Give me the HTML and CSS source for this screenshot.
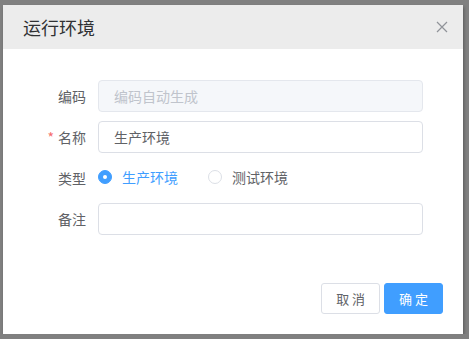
FILE: index.html
```html
<!DOCTYPE html>
<html lang="zh">
<head>
    <meta charset="UTF-8">
    <title>运行环境</title>
    <link rel="stylesheet" href="styles.css">
</head>
<body>
    <div class="dialog">
        <div class="dialog-header">
            <span class="dialog-title">运行环境</span>
            <span class="dialog-close">
                <svg width="12" height="12" viewBox="0 0 12 12"><path d="M1 1L11 11M11 1L1 11" stroke="#909399" stroke-width="1.2" fill="none"/></svg>
            </span>
        </div>
        <div class="dialog-body">
            <div class="form-item">
                <label class="form-label">编码</label>
                <input class="input" disabled placeholder="编码自动生成">
            </div>
            <div class="form-item">
                <label class="form-label required">名称</label>
                <input class="input" value="生产环境">
            </div>
            <div class="form-item">
                <label class="form-label">类型</label>
                <div class="radios">
                    <label class="radio checked"><span class="radio-inner"></span><span class="radio-text">生产环境</span></label>
                    <label class="radio"><span class="radio-inner"></span><span class="radio-text">测试环境</span></label>
                </div>
            </div>
            <div class="form-item">
                <label class="form-label">备注</label>
                <input class="input">
            </div>
        </div>
        <div class="dialog-footer">
            <button class="btn">取 消</button>
            <button class="btn btn-primary">确 定</button>
        </div>
    </div>
</body>
</html>
```

FILE: styles.css
```css
body { margin: 0; background: #808080; font-family: "Noto Sans CJK SC", "Noto Sans", sans-serif; }
.dialog { width: 460px; margin: 5px 0 0 3px; background: #fff; box-shadow: 1px 2px 3px rgba(0,0,0,0.3); }
.dialog-header { height: 44px; background: #ececec; display: flex; align-items: center; justify-content: space-between; padding: 0 15px 0 20px; }
.dialog-title { font-size: 18px; color: #303133; }
.dialog-close { display: flex; }
.dialog-body { padding: 31px 40px 38px 20px; }
.form-item { display: flex; align-items: center; height: 32px; margin-bottom: 9px; }
.form-item:last-child { margin-bottom: 0; }
.form-label { width: 75px; padding-right: 12px; box-sizing: border-box; text-align: right; font-size: 14px; color: #606266; }
.form-label.required::before { content: "*"; color: #f56c6c; margin-right: 4px; }
.input { flex: 1; height: 32px; box-sizing: border-box; border: 1px solid #dcdfe6; border-radius: 4px; padding: 0 15px; font-size: 14px; font-family: inherit; color: #606266; outline: none; }
.input:disabled { background: #f5f7fa; border-color: #e4e7ed; }
.input::placeholder { color: #c0c4cc; }
.radios { display: flex; gap: 30px; margin-top: -2px; }
.radio { display: flex; align-items: center; font-size: 14px; color: #606266; }
.radio-inner { width: 14px; height: 14px; box-sizing: border-box; border: 1px solid #dcdfe6; border-radius: 50%; margin-right: 10px; position: relative; }
.radio.checked { color: #409eff; }
.radio.checked .radio-inner { background: #409eff; border-color: #409eff; }
.radio.checked .radio-inner::after { content: ""; position: absolute; width: 4px; height: 4px; background: #fff; border-radius: 50%; left: 4px; top: 4px; }
.dialog-footer { display: flex; justify-content: flex-end; gap: 4px; padding: 10px 20px 20px; }
.btn { height: 31px; padding: 0 14px; border: 1px solid #dcdfe6; border-radius: 3px; background: #fff; color: #606266; font-size: 13px; font-family: inherit; }
.btn-primary { background: #409eff; border-color: #409eff; color: #fff; }
```
